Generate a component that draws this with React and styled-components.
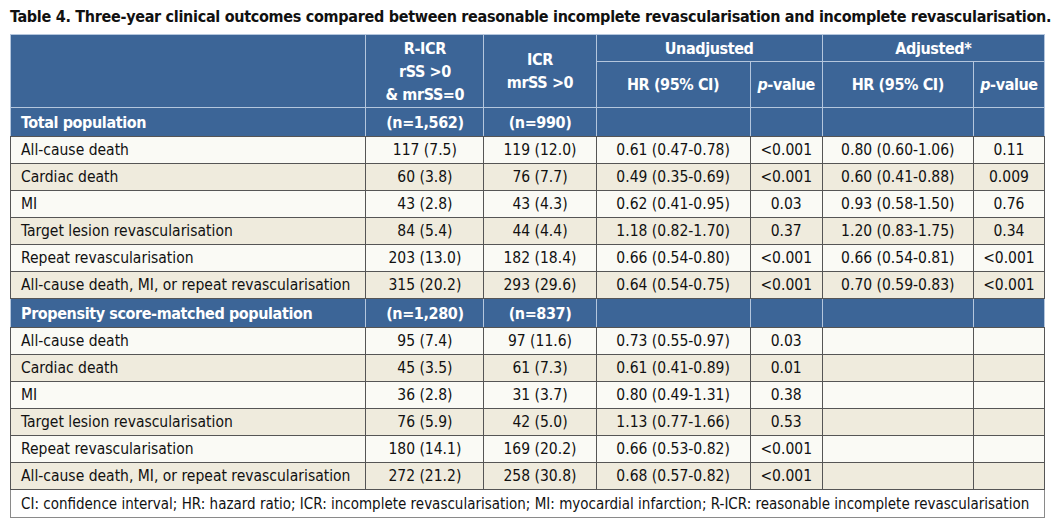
import React from 'react';
import styled, { createGlobalStyle } from 'styled-components';

const GlobalStyle = createGlobalStyle`
  body {
    margin: 0;
    background: #ffffff;
  }
`;

const HEAD_FONT = `"Liberation Sans Narrow", "DejaVu Sans Condensed", "Liberation Sans", sans-serif`;
const BODY_FONT = `"DejaVu Sans Condensed", "DejaVu Sans", sans-serif`;

const COLS = [355, 118, 112, 154, 72, 151, 71];

const SECTIONS = [
    {
        title: 'Total population',
        nR: '(n=1,562)',
        nI: '(n=990)',
        rows: [
            ['All-cause death', '117 (7.5)', '119 (12.0)', '0.61 (0.47-0.78)', '<0.001', '0.80 (0.60-1.06)', '0.11'],
            ['Cardiac death', '60 (3.8)', '76 (7.7)', '0.49 (0.35-0.69)', '<0.001', '0.60 (0.41-0.88)', '0.009'],
            ['MI', '43 (2.8)', '43 (4.3)', '0.62 (0.41-0.95)', '0.03', '0.93 (0.58-1.50)', '0.76'],
            ['Target lesion revascularisation', '84 (5.4)', '44 (4.4)', '1.18 (0.82-1.70)', '0.37', '1.20 (0.83-1.75)', '0.34'],
            ['Repeat revascularisation', '203 (13.0)', '182 (18.4)', '0.66 (0.54-0.80)', '<0.001', '0.66 (0.54-0.81)', '<0.001'],
            ['All-cause death, MI, or repeat revascularisation', '315 (20.2)', '293 (29.6)', '0.64 (0.54-0.75)', '<0.001', '0.70 (0.59-0.83)', '<0.001'],
        ],
    },
    {
        title: 'Propensity score-matched population',
        nR: '(n=1,280)',
        nI: '(n=837)',
        rows: [
            ['All-cause death', '95 (7.4)', '97 (11.6)', '0.73 (0.55-0.97)', '0.03', '', ''],
            ['Cardiac death', '45 (3.5)', '61 (7.3)', '0.61 (0.41-0.89)', '0.01', '', ''],
            ['MI', '36 (2.8)', '31 (3.7)', '0.80 (0.49-1.31)', '0.38', '', ''],
            ['Target lesion revascularisation', '76 (5.9)', '42 (5.0)', '1.13 (0.77-1.66)', '0.53', '', ''],
            ['Repeat revascularisation', '180 (14.1)', '169 (20.2)', '0.66 (0.53-0.82)', '<0.001', '', ''],
            ['All-cause death, MI, or repeat revascularisation', '272 (21.2)', '258 (30.8)', '0.68 (0.57-0.82)', '<0.001', '', ''],
        ],
    },
];

const Page = styled.div`
  padding: 6px 0 0 10px;
  width: 1035px;
`;

const Title = styled.h1`
  margin: 0 0 6px 0;
  font-family: ${HEAD_FONT};
  font-weight: 700;
  font-size: 16px;
  letter-spacing: -0.3px;
  line-height: 22px;
  color: #111;
  white-space: nowrap;
`;

const Table = styled.table`
  border-collapse: collapse;
  table-layout: fixed;
  width: 1035px;
  border: 1px solid #8a8a8a;
`;

const HeadCell = styled.th`
  background: #3c6597;
  color: #ffffff;
  font-family: ${HEAD_FONT};
  font-weight: 700;
  font-size: 16px;
  letter-spacing: -0.4px;
  line-height: 23px;
  text-align: center;
  padding: 0;
  border: 1px solid #b4c6dd;
  height: ${(p) => p.h || 27}px;
  vertical-align: middle;
`;

const SectionCell = styled(HeadCell)`
  text-align: ${(p) => (p.left ? 'left' : 'center')};
  padding-left: ${(p) => (p.left ? '10px' : '0')};
  border-bottom-color: #555;
`;

const Row = styled.tr`
  background: ${(p) => (p.shade ? '#efebdd' : '#fafaf5')};
`;

const Cell = styled.td`
  font-family: ${BODY_FONT};
  font-size: 15.5px;
  color: #111;
  height: 26px;
  padding: 0;
  padding-left: ${(p) => (p.left ? '10px' : '0')};
  text-align: ${(p) => (p.left ? 'left' : 'center')};
  border: 1px solid #555;
  white-space: nowrap;
`;

const Note = styled.td`
  font-family: ${BODY_FONT};
  font-size: 15px;
  color: #111;
  height: 25px;
  padding-left: 10px;
  background: #ffffff;
  border: 1px solid #8a8a8a;
  white-space: nowrap;
`;

const PValue = () => (
    <>
        <i>p</i>-value
    </>
);

let rowIndex = 0;

const App = () => {
    rowIndex = 0;
    return (
        <Page>
            <GlobalStyle />
            <Title>
                Table 4. Three-year clinical outcomes compared between reasonable incomplete revascularisation and incomplete revascularisation.
            </Title>
            <Table>
                <colgroup>
                    {COLS.map((w, i) => (
                        <col key={i} style={{ width: w }} />
                    ))}
                </colgroup>
                <thead>
                    <tr>
                        <HeadCell rowSpan={2} />
                        <HeadCell rowSpan={2}>
                            R-ICR<br />rSS &gt;0<br />&amp; mrSS=0
                        </HeadCell>
                        <HeadCell rowSpan={2}>
                            ICR<br />mrSS &gt;0
                        </HeadCell>
                        <HeadCell colSpan={2} h={26}>Unadjusted</HeadCell>
                        <HeadCell colSpan={2} h={26}>Adjusted*</HeadCell>
                    </tr>
                    <tr>
                        <HeadCell h={45}>HR (95% CI)</HeadCell>
                        <HeadCell h={45}><PValue /></HeadCell>
                        <HeadCell h={45}>HR (95% CI)</HeadCell>
                        <HeadCell h={45}><PValue /></HeadCell>
                    </tr>
                </thead>
                <tbody>
                    {SECTIONS.map((s) => (
                        <React.Fragment key={s.title}>
                            <tr>
                                <SectionCell left h={28}>{s.title}</SectionCell>
                                <SectionCell h={28}>{s.nR}</SectionCell>
                                <SectionCell h={28}>{s.nI}</SectionCell>
                                <SectionCell h={28} />
                                <SectionCell h={28} />
                                <SectionCell h={28} />
                                <SectionCell h={28} />
                            </tr>
                            {s.rows.map((r) => {
                                const shade = rowIndex++ % 2 === 1;
                                return (
                                    <Row key={r[0]} shade={shade ? 1 : 0}>
                                        {r.map((v, i) => (
                                            <Cell key={i} left={i === 0 ? 1 : 0}>{v}</Cell>
                                        ))}
                                    </Row>
                                );
                            })}
                        </React.Fragment>
                    ))}
                    <tr>
                        <Note colSpan={7}>
                            CI: confidence interval; HR: hazard ratio; ICR: incomplete revascularisation; MI: myocardial infarction; R-ICR: reasonable incomplete revascularisation
                        </Note>
                    </tr>
                </tbody>
            </Table>
        </Page>
    );
};

export default App;
